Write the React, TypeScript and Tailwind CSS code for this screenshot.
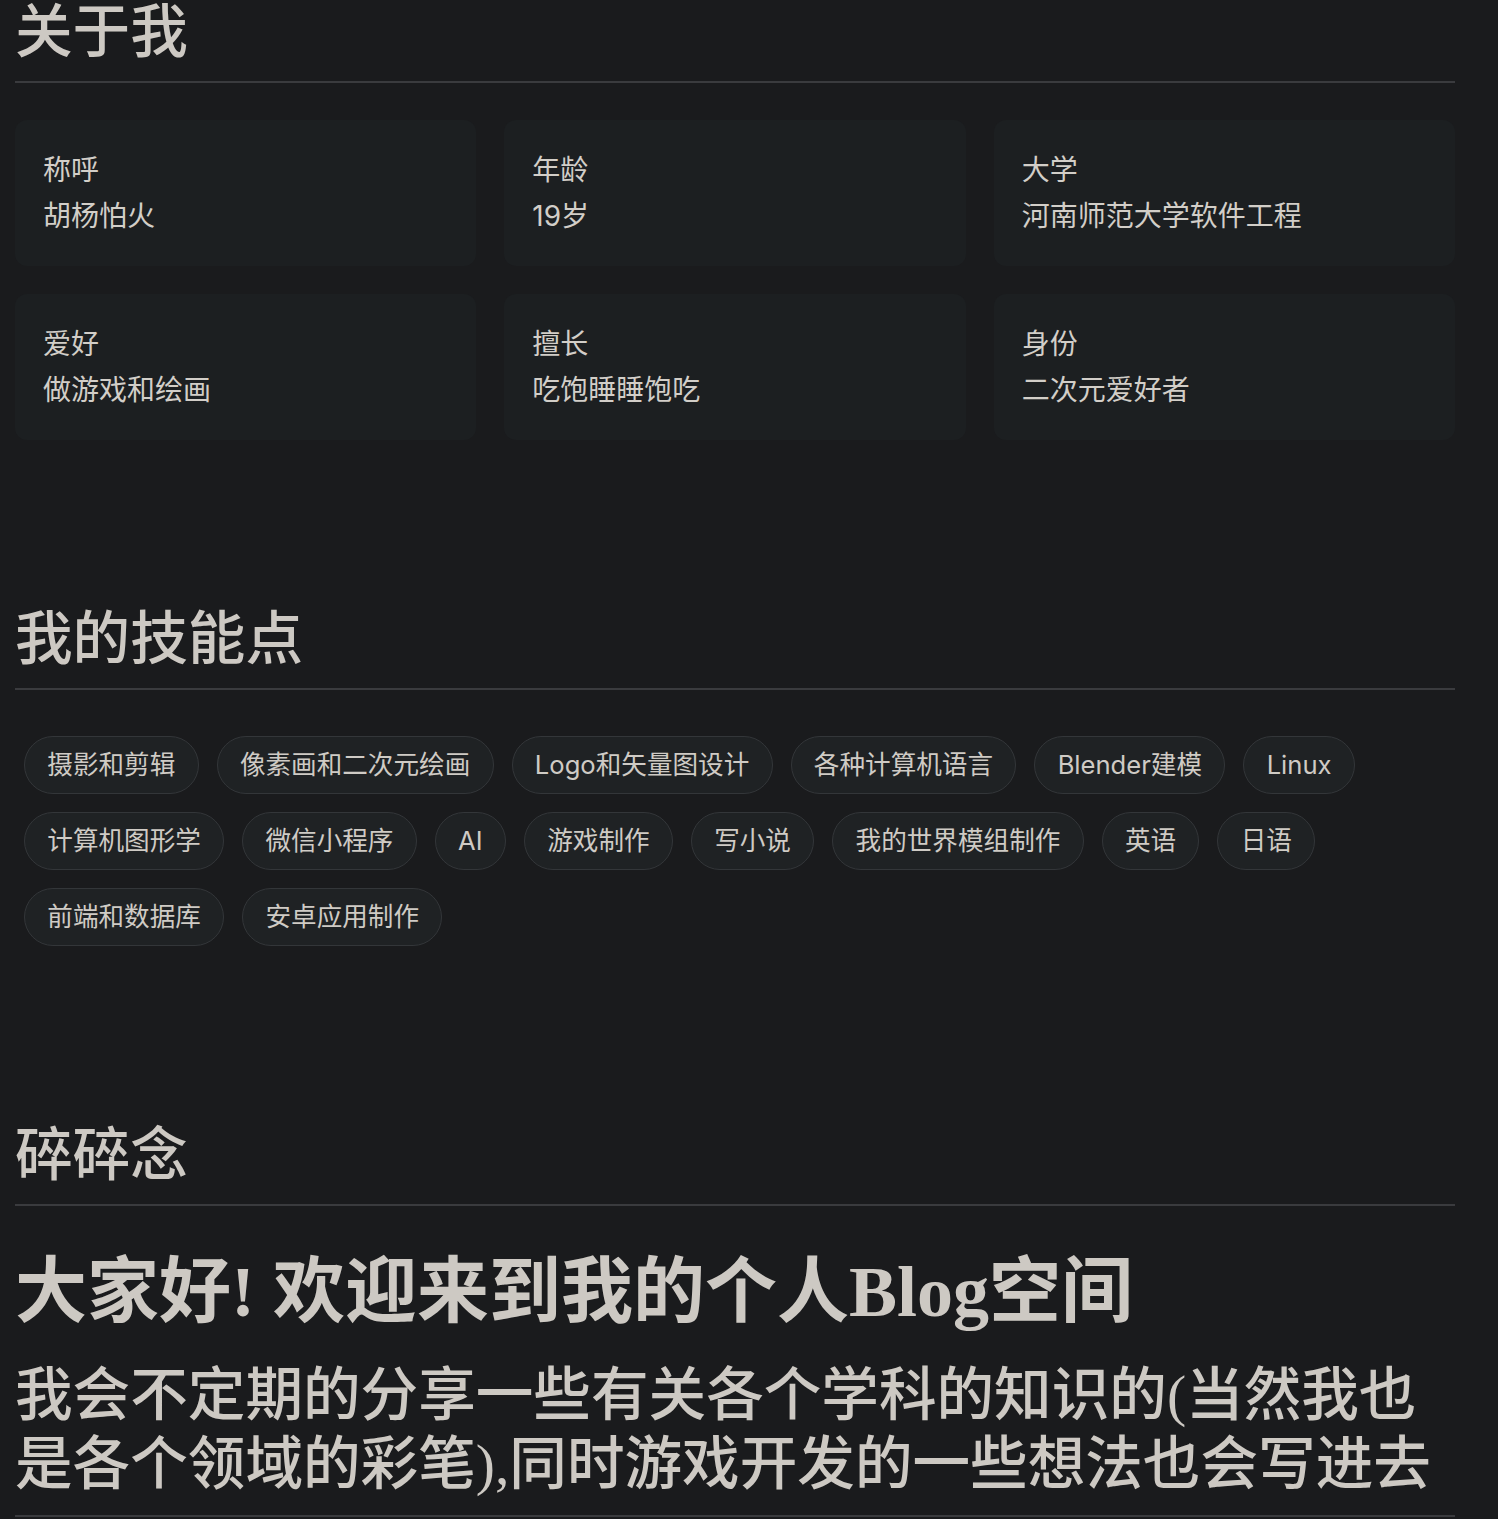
import React from 'react';

interface InfoItem {
  label: string;
  value: string;
}

const infoItems: InfoItem[] = [
  { label: '称呼', value: '胡杨怕火' },
  { label: '年龄', value: '19岁' },
  { label: '大学', value: '河南师范大学软件工程' },
  { label: '爱好', value: '做游戏和绘画' },
  { label: '擅长', value: '吃饱睡睡饱吃' },
  { label: '身份', value: '二次元爱好者' },
];

const skills = [
  '摄影和剪辑',
  '像素画和二次元绘画',
  'Logo和矢量图设计',
  '各种计算机语言',
  'Blender建模',
  'Linux',
  '计算机图形学',
  '微信小程序',
  'AI',
  '游戏制作',
  '写小说',
  '我的世界模组制作',
  '英语',
  '日语',
  '前端和数据库',
  '安卓应用制作',
];

const serif = "font-['Liberation_Serif','Noto_Sans_CJK_SC',serif]";
const sans = "font-['Inter','Noto_Sans_CJK_SC',sans-serif]";

function SectionTitle({ children, first }: { children: React.ReactNode; first?: boolean }) {
  return (
    <h2
      className={`${serif} ${first ? 'mt-[-7px]' : ''} border-b-2 border-[#3a3b3e] pt-[5px] pb-[14px] text-[57.6px] font-medium leading-[69px] text-[#cdc9c3]`}
    >
      {children}
    </h2>
  );
}

export default function App() {
  return (
    <div className="min-h-screen bg-[#1a1b1d] pb-[4px]">
      <div className="w-[1440px] ml-[15px] overflow-hidden">
        {/* 关于我 */}
        <section>
          <SectionTitle first>关于我</SectionTitle>
          <div className="mt-[37px] grid grid-cols-3 gap-[28px]">
            {infoItems.map((item) => (
              <div
                key={item.label}
                className={`${sans} rounded-xl bg-[#1c1f21] px-[28px] py-[27px] text-[28px] leading-[46px] text-[#d2cec8]`}
              >
                <div>{item.label}</div>
                <div>{item.value}</div>
              </div>
            ))}
          </div>
        </section>

        {/* 我的技能点 */}
        <section className="mt-[160px]">
          <SectionTitle>我的技能点</SectionTitle>
          <div className="mt-[37px] flex flex-wrap">
            {skills.map((s) => (
              <span
                key={s}
                className={`${sans} m-[9px] rounded-full border border-[#333639] bg-[#1f2224] px-[22.3px] py-[9px] text-[25.6px] leading-[38px] text-[#cfcbc5]`}
              >
                {s}
              </span>
            ))}
          </div>
        </section>

        {/* 碎碎念 */}
        <section className="mt-[161px]">
          <SectionTitle>碎碎念</SectionTitle>
          <h1 className={`${serif} mt-[43px] text-[72px] font-bold leading-[86px] text-[#cdc9c3]`}>
            大家好! 欢迎来到我的个人Blog空间
          </h1>
          <p
            className={`${serif} mt-[23px] border-b-2 border-[#3a3b3e] pt-[4px] pb-[16px] text-[57.6px] font-medium leading-[68.5px] text-[#cdc9c3]`}
          >
            我会不定期的分享一些有关各个学科的知识的(当然我也是各个领域的彩笔),同时游戏开发的一些想法也会写进去
          </p>
        </section>
      </div>
    </div>
  );
}
